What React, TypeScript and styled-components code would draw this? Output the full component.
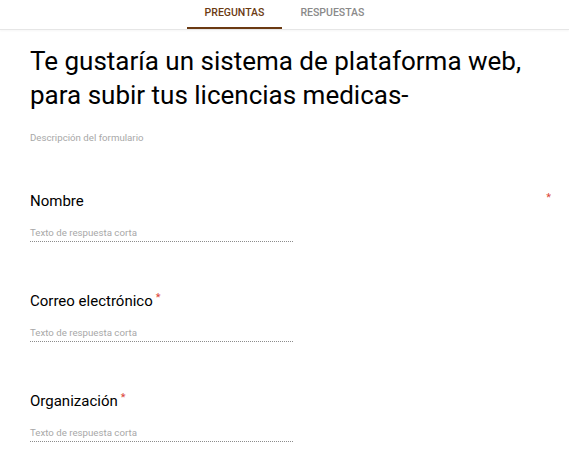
import React from "react";
import styled, { createGlobalStyle } from "styled-components";

const Global = createGlobalStyle`
  html, body { margin: 0; padding: 0; background: #ffffff; }
  body { font-family: Roboto, "Liberation Sans", Arial, sans-serif; color: #000; }
`;

const TabBar = styled.nav`
  display: flex;
  justify-content: center;
  height: 29px;
  border-bottom: 1px solid #e6e6e6;
  box-shadow: 0 1px 2px rgba(0, 0, 0, 0.04);
`;

const Tab = styled.div<{ $active?: boolean }>`
  position: relative;
  padding: 6px 18px 0;
  font-size: 10.5px;
  line-height: 13px;
  font-weight: 500;
  text-transform: uppercase;
  color: ${(p) => (p.$active ? "#6b3a12" : "#8a8a8a")};
  &::after {
    content: "";
    display: ${(p) => (p.$active ? "block" : "none")};
    position: absolute;
    left: 0;
    right: 0;
    bottom: 0;
    height: 2px;
    background: #6b3a12;
  }
`;

const Form = styled.main`
  padding: 14px 18px 0 30px;
`;

const Title = styled.h1`
  margin: 0;
  font-size: 26px;
  line-height: 34px;
  font-weight: 400;
  color: #000;
  max-width: 500px;
`;

const Description = styled.p`
  margin: 20px 0 0;
  font-size: 9.7px;
  line-height: 11px;
  color: #a8a8a8;
`;

const Question = styled.section<{ $first?: boolean }>`
  margin-top: ${(p) => (p.$first ? "48.5px" : "49.5px")};
`;

const QuestionHead = styled.div<{ $spread?: boolean }>`
  display: flex;
  align-items: flex-start;
  justify-content: ${(p) => (p.$spread ? "space-between" : "flex-start")};
  gap: 3px;
`;

const Label = styled.span`
  font-size: 15px;
  line-height: 18px;
  color: #000;
`;

const Required = styled.span`
  font-size: 11px;
  line-height: 11px;
  color: #db4437;
`;

const Answer = styled.div`
  margin-top: 17.5px;
  width: 263px;
  padding-bottom: 3px;
  border-bottom: 1px dotted #8c8c8c;
  font-size: 9.7px;
  line-height: 11px;
  color: #a8a8a8;
`;

const questions = [
  { label: "Nombre", spread: true },
  { label: "Correo electrónico", spread: false },
  { label: "Organización", spread: false },
];

export default function App() {
  return (
    <>
      <Global />
      <TabBar>
        <Tab $active>Preguntas</Tab>
        <Tab>Respuestas</Tab>
      </TabBar>
      <Form>
        <Title>Te gustaría un sistema de plataforma web, para subir tus licencias medicas-</Title>
        <Description>Descripción del formulario</Description>
        {questions.map((q, i) => (
          <Question key={q.label} $first={i === 0}>
            <QuestionHead $spread={q.spread}>
              <Label>{q.label}</Label>
              <Required>*</Required>
            </QuestionHead>
            <Answer>Texto de respuesta corta</Answer>
          </Question>
        ))}
      </Form>
    </>
  );
}
